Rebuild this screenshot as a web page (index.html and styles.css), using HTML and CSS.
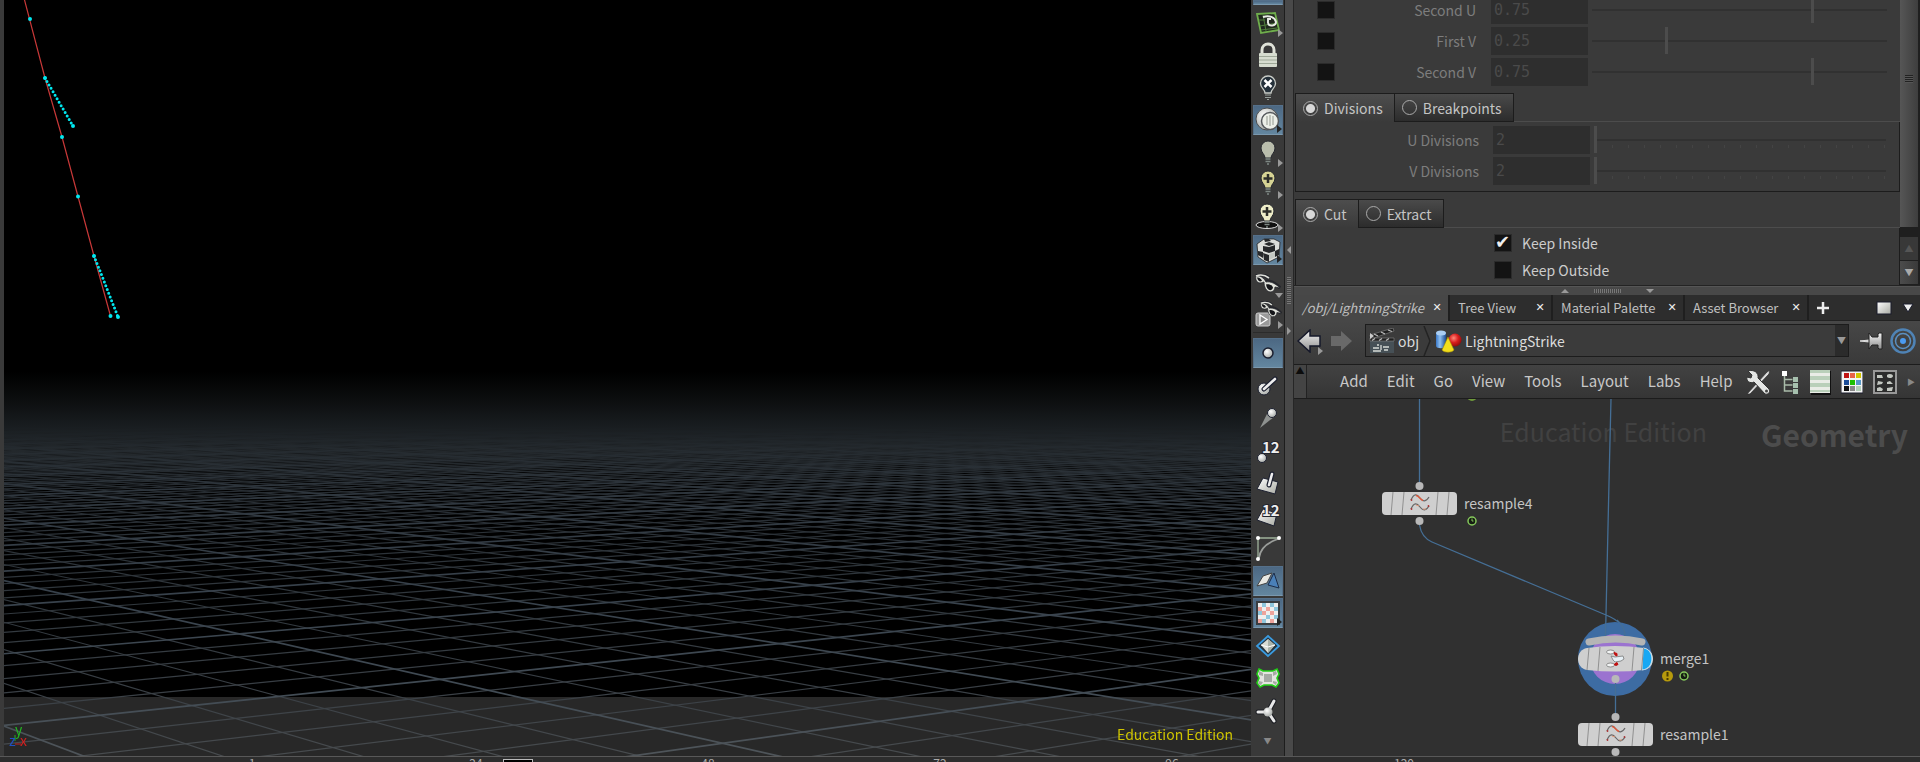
FILE: index.html
```html
<!DOCTYPE html>
<html lang="en">
<head>
<meta charset="utf-8">
<title>/obj/LightningStrike</title>
<link rel="stylesheet" href="styles.css">
</head>
<body>
<svg class="defs" aria-hidden="true">
  <defs>
    <linearGradient id="silver" x1="0" y1="0" x2="1" y2="1"><stop offset="0" stop-color="#fff"/><stop offset="1" stop-color="#a8aaa2"/></linearGradient>
    <linearGradient id="steel" x1="0" y1="0" x2="0" y2="1"><stop offset="0" stop-color="#f4f4f4"/><stop offset="1" stop-color="#8e8e8e"/></linearGradient>
    <linearGradient id="cyl" x1="0" y1="0" x2="1" y2="0"><stop offset="0" stop-color="#3a78c8"/><stop offset=".4" stop-color="#8fc0f0"/><stop offset="1" stop-color="#1b4a90"/></linearGradient>
    <radialGradient id="ball" cx=".38" cy=".35" r=".7"><stop offset="0" stop-color="#fff"/><stop offset="1" stop-color="#a4a8a4"/></radialGradient>
    <radialGradient id="redball" cx=".4" cy=".35" r=".7"><stop offset="0" stop-color="#ff8a7a"/><stop offset=".5" stop-color="#d81e1e"/><stop offset="1" stop-color="#8a0808"/></radialGradient>
    <symbol id="glasses" viewBox="0 0 26 19">
      <path d="M1 2c4-2 9-1 13 2M9 8c5-2 11 1 16 6" fill="none" stroke="#25262c" stroke-width="3.600"/>
      <path d="M1 2c-1 4 1 7 4 7 2 0 3-1 4-1 0 5 2 9 6 10 3 0 5-2 5-5l5 1c-4-4-9-7-14-6C9 4 5 1 1 2z" fill="#dfe1da" stroke="#25262c" stroke-width=".8"/>
      <path d="M1 2c4-1.500 9-1 13 2" fill="none" stroke="#dfe1da" stroke-width="1.600"/>
      <path d="M2 3.500c2-.5 4 1 5 3-1 1.500-4 1.500-5-3zM11 10.500c2-1 6 0 7 3-1 4-6 4-7-3z" fill="#141519"/>
    </symbol>
    <symbol id="wave" viewBox="0 0 20 18">
      <path d="M1 6c3-7 6-6 9-2s6 4 9-1M1 15c3-7 6-6 9-2s6 4 9-1" fill="none" stroke="#666" stroke-width="1.200"/>
      <path d="M6 1.500c3 0 4 4 7 5" fill="none" stroke="#e0583a" stroke-width="1.400"/>
      <path d="M6 11l3 1M13 15l3 0" fill="none" stroke="#e09a7a"/>
      <circle cx="1.500" cy="6" r=".9" fill="#a33"/><circle cx="1.500" cy="15" r=".9" fill="#a33"/><circle cx="18.500" cy="12" r=".9" fill="#a33"/>
    </symbol>
    <symbol id="clock" viewBox="0 0 10 10"><circle cx="5" cy="5" r="4" fill="#151c12" stroke="#86c95c" stroke-width="1.500"/><path d="M5 2.500V5h1.500" fill="none" stroke="#86c95c"/></symbol>
    <symbol id="bulb" viewBox="0 0 16 26"><path d="M5 18C5 14 1 13 1 8a7 7 0 0 1 14 0c0 5-4 6-4 10z" stroke="#26282e"/><path d="M5.500 19h5M5.500 21.500h5M7 24h2" stroke="#7e8884" stroke-width="1.500"/></symbol>
  </defs>
</svg>
<main class="workspace">
  <section class="viewport" aria-label="Scene view">
    <canvas class="grid-canvas"></canvas>
    <svg class="bolt" width="140" height="330" viewBox="0 0 140 330">
      <path class="bolt-line" d="M20 -2L41 78L58 137L74 196.500L90 256L106.500 316"/>
      <path class="bolt-points dense" d="M41 78L69 126M90 256L98 276L114 317"/>
      <path class="bolt-points" d="M26 19h0M41 78h0M58 137h0M74 196.500h0M90 256h0M106.500 316h0M69 126h0M114 317h0"/>
    </svg>
    <svg class="gizmo" width="26" height="26" viewBox="0 0 26 26">
      <path d="M9 18V12" stroke="#20b020"/><path d="M9 21h6" stroke="#c02020"/>
      <text x="9" y="12" fill="#22b822">y</text><text x="3" y="23" fill="#2050c0">z</text><text x="14" y="23" fill="#d02020">x</text>
    </svg>
    <p class="edition">Education Edition</p>
  </section>

  <nav class="toolbar" aria-label="Display options">
    <div class="tools">
      <button class="tool on clipped" aria-label="View mode"></button>
      <button class="tool more" aria-label="Reference plane"><svg width="26" height="24" viewBox="0 0 26 24"><path d="M2 3L20 2l4 17-18 3z" fill="#20281e" stroke="#6fae4c" stroke-width="1.800"/><path d="M5 15l17-3M6 19l16-2M4 9h6M8 4l3 16" stroke="#4f7c3c"/><path d="M8 6c6-2 12 0 13 5 0 4-7 5-8 1M13 12v-4h3" fill="none" stroke="#e8ece4" stroke-width="1.900"/></svg></button>
      <button class="tool" aria-label="Lock camera"><svg width="22" height="26" viewBox="0 0 22 26"><path d="M5 13V8c0-8 12-8 12 0v5" fill="none" stroke="#dfe2d8" stroke-width="3"/><rect x="2" y="11" width="18" height="14" rx="1" fill="#d6dccf"/><path d="M2 14.500h18M2 18h18M2 21.500h18" stroke="#9ea898"/></svg></button>
      <button class="tool" aria-label="No lights"><svg width="18" height="28" viewBox="0 0 18 26"><path d="M6 18C6 14 1.500 13 1.500 8.500a7.500 7.500 0 0 1 15 0C16.500 13 12 14 12 18z" fill="#24303a" stroke="#c9cdc8" stroke-width="1.300"/><path d="M5.500 5l7 7M12.500 5l-7 7" stroke="#fff" stroke-width="2.500"/><path d="M6 20h6M6 22.500h6M8 24.500h2" stroke="#98a09c"/></svg></button>
      <button class="tool on more" aria-label="Headlight"><svg width="26" height="26" viewBox="0 0 26 26"><circle cx="12" cy="12" r="11" fill="url(#ball)" stroke="#4a4d50"/><circle cx="15" cy="14" r="8.500" fill="#ecefe8" stroke="#55585c" stroke-width="1.500"/><path d="M12 9v9M15 8v11M18 9v9" stroke="#a9ada6" stroke-width="1.300"/></svg></button>
      <button class="tool more" aria-label="Normal lighting"><svg width="16" height="26" fill="#b9bdac"><use href="#bulb"/></svg></button>
      <button class="tool more raised" aria-label="High quality lighting"><svg width="16" height="26" viewBox="0 0 16 26" fill="#d6d394"><use href="#bulb"/><path d="M8 4v9M3.500 8.500h9" stroke="#2e2f2a" stroke-width="2.500"/></svg></button>
      <button class="tool more raised" aria-label="Shadows"><svg width="26" height="27" viewBox="0 0 26 27" fill="#eeedc8"><ellipse cx="12" cy="22" rx="11" ry="3.500" fill="#111" stroke="#ddd"/><use href="#bulb" x="4" width="16" height="26"/><path d="M12 4v9M7.500 8.500h9" stroke="#2e2f2a" stroke-width="2.500"/></svg></button>
      <button class="tool on more" aria-label="Materials"><svg width="26" height="28" viewBox="0 0 26 28"><path d="M2 8L9 3h10l6 3-1 15-12 6-9-6z" fill="#dcdeda" stroke="#222" stroke-width=".8"/><path d="M8 10l6 1v6l-6-2zM14 11l6-2v6l-6 2zM3 15l5 1v6l-5-3zM14 19l-6-2 1 7 5 2zM20 15l4-2v6l-4 2zM9 3l5 0 2 2-6 1zM9 8l5-2 6 2-6 2z" fill="#26282a"/><path d="M14 18l6-2v5l-6 3z" fill="#c4c8c2"/></svg></button>
      <button class="tool more-down" aria-label="Display geometry"><svg width="26" height="19"><use href="#glasses"/></svg></button>
      <button class="tool more" aria-label="Flipbook"><svg width="28" height="28" viewBox="0 0 28 28"><rect x="2" y="12" width="14" height="13" rx="2" fill="#9a9a9a" stroke="#ccc"/><path d="M6 14l7 4.500L6 23z" fill="#888" stroke="#fff" stroke-width="1.300"/><use href="#glasses" x="6" y="0" width="22" height="17"/></svg></button>
    </div>
    <div class="tools lower">
      <button class="tool on" aria-label="Points"><svg width="26" height="26"><circle cx="13" cy="13" r="5" fill="url(#ball)" stroke="#1c2030" stroke-width="1.500"/></svg></button>
      <button class="tool" aria-label="Point normals"><svg width="24" height="22" viewBox="0 0 24 22"><circle cx="8" cy="14" r="6" fill="url(#ball)" stroke="#1c2030"/><path d="M8 14L19 4" stroke="#1c2030" stroke-width="5" stroke-linecap="round"/><path d="M8 14L19 4" stroke="#eee" stroke-width="2.600" stroke-linecap="round"/></svg></button>
      <button class="tool" aria-label="Point trails"><svg width="22" height="24" viewBox="0 0 22 24"><path d="M3 22L11 6l6 5z" fill="#8f9290"/><circle cx="15" cy="7" r="4.500" fill="url(#ball)" stroke="#1c2030"/></svg></button>
      <button class="tool" aria-label="Point numbers"><svg width="26" height="26" viewBox="0 0 26 26"><circle cx="7" cy="20" r="4.500" fill="url(#ball)" stroke="#1c2030"/><text class="num" x="7" y="15">12</text></svg></button>
      <button class="tool" aria-label="Primitive normals"><svg width="26" height="26" viewBox="0 0 26 26"><path d="M2 19l6-11 15 4-3 12z" fill="url(#silver)" stroke="#1c2030"/><path d="M14 15l3-11" stroke="#1c2030" stroke-width="5" stroke-linecap="round"/><path d="M14 15l3-11" stroke="#eee" stroke-width="2.600" stroke-linecap="round"/></svg></button>
      <button class="tool" aria-label="Primitive numbers"><svg width="26" height="26" viewBox="0 0 26 26"><path d="M2 17l6-11 14 4-3 13z" fill="url(#silver)" stroke="#1c2030"/><text class="num" x="7" y="13">12</text></svg></button>
      <button class="tool" aria-label="Hulls"><svg width="26" height="28" viewBox="0 0 26 28"><path d="M3 4h21M3 4v21" stroke="#9fb19a" stroke-width="1.300"/><path d="M23 5C11 9 5 15 4 24" fill="none" stroke="#9a9d9a" stroke-width="1.800"/><g fill="#fff"><circle cx="3" cy="4" r="2"/><circle cx="24" cy="4" r="2"/><circle cx="3" cy="25" r="2"/></g></svg></button>
      <button class="tool on" aria-label="Faces"><svg width="24" height="20" viewBox="0 0 24 20"><path d="M12 14l6-12 5 15z" fill="#4a80b8" stroke="#1c2c48"/><path d="M1 15L7 5l9-3-5 10z" fill="#e8e8e2" stroke="#444"/></svg></button>
      <button class="tool on more" aria-label="UV texture"><svg width="24" height="24" viewBox="0 0 24 24"><rect x="1" y="1" width="22" height="22" fill="#eee" stroke="#3a3d40" stroke-width="2"/><path d="M6 2h4v4H6zM18 6h4v4h-4zM2 10h4v4H2zM10 14h4v4h-4zM14 2h4v4h-4zM6 18h4v4H6zM18 14h4v4h-4z" fill="#8fc6dc"/><path d="M2 6h4v4H2zM10 6h4v4h-4zM14 10h4v4h-4zM2 18h4v4H2zM14 18h4v4h-4zM6 10h4v4H6z" fill="#eda39b"/></svg></button>
      <button class="tool" aria-label="Profiles"><svg width="26" height="24" viewBox="0 0 26 24"><path d="M13 2l11 10-11 10L2 12z" fill="#26343e" stroke="#3a9be0" stroke-width="1.800"/><path d="M13 5l7 6-7 8-7-8z" fill="#d8dcd4"/><path d="M13 5v14l7-8z" fill="#a9b2a9"/><path d="M6 11l7 2 7-2" fill="none" stroke="#fff"/></svg></button>
      <button class="tool" aria-label="Subdivision"><svg width="26" height="22" viewBox="0 0 26 22"><path d="M4 2l4 2h10l4-2 2 5-2 4 2 5-3 4-4-2H9l-4 2-3-4 2-5-2-4z" fill="#e4e4e0" stroke="#22d016" stroke-width="1.600"/><path d="M9 7h8v8H9zM4 4l4 2v3L4 8zM18 5l3-1 1 3-4 2zM4 14l4 1-2 3-3-1zM18 14l4 1-1 3-3-2z" fill="#a6aaa4"/></svg></button>
      <button class="tool" aria-label="Origin axes"><svg width="26" height="26" viewBox="0 0 26 26"><path d="M13 14H3M13 14l6-11M13 14l6 9" stroke="#1c1e24" stroke-width="5" stroke-linecap="round"/><path d="M13 14H3M13 14l6-11M13 14l6 9" stroke="#e8e8e8" stroke-width="3" stroke-linecap="round"/><circle cx="13" cy="14" r="4.500" fill="url(#ball)"/></svg></button>
    </div>
    <button class="scroll-more" aria-label="More tools">▼</button>
  </nav>

  <div class="splitter-v"><span class="arrow-left"></span><span class="grip-v"></span><span class="arrow-right"></span></div>

  <section class="right-pane">
    <div class="params">
      <form class="params-body">
        <div class="param-rows">
          <div class="param"><input type="checkbox" aria-label="Enable Second U"><label for="su">Second U</label><input class="field" id="su" value="0.75" disabled><input type="range" min="0" max="100" value="75" disabled aria-label="Second U slider"></div>
          <div class="param"><input type="checkbox" aria-label="Enable First V"><label for="fv">First V</label><input class="field" id="fv" value="0.25" disabled><input type="range" min="0" max="100" value="25" disabled aria-label="First V slider"></div>
          <div class="param"><input type="checkbox" aria-label="Enable Second V"><label for="sv">Second V</label><input class="field" id="sv" value="0.75" disabled><input type="range" min="0" max="100" value="75" disabled aria-label="Second V slider"></div>
        </div>
        <div class="radio-tabs">
          <label class="radio-tab current"><input type="radio" name="split" checked>Divisions</label>
          <label class="radio-tab"><input type="radio" name="split">Breakpoints</label>
          <span class="tab-rule"></span>
        </div>
        <div class="group divisions">
          <div class="param int"><label for="ud">U Divisions</label><input class="field" id="ud" value="2" disabled><input type="range" min="2" max="20" value="2" disabled aria-label="U Divisions slider"></div>
          <div class="param int"><label for="vd">V Divisions</label><input class="field" id="vd" value="2" disabled><input type="range" min="2" max="20" value="2" disabled aria-label="V Divisions slider"></div>
        </div>
        <div class="radio-tabs">
          <label class="radio-tab current"><input type="radio" name="op" checked>Cut</label>
          <label class="radio-tab"><input type="radio" name="op">Extract</label>
          <span class="tab-rule"></span>
        </div>
        <div class="group keep">
          <label class="check"><input type="checkbox" checked>Keep Inside</label>
          <label class="check"><input type="checkbox">Keep Outside</label>
        </div>
      </form>
      <div class="scrollbar">
        <div class="scroll-thumb"><span></span></div>
        <button class="scroll-btn dim" aria-label="Scroll up">▲</button>
        <button class="scroll-btn" aria-label="Scroll down">▼</button>
      </div>
    </div>

    <div class="splitter-h"><span class="arrow-up"></span><span class="grip-h"></span><span class="arrow-down"></span></div>

    <div class="tabs">
      <div class="tab active"><span>/obj/LightningStrike</span><button aria-label="Close">✕</button></div>
      <div class="tab tree"><span>Tree View</span><button aria-label="Close">✕</button></div>
      <div class="tab mat"><span>Material Palette</span><button aria-label="Close">✕</button></div>
      <div class="tab asset"><span>Asset Browser</span><button aria-label="Close">✕</button></div>
      <button class="add-tab" aria-label="New tab"><svg width="14" height="14"><path d="M7 1v12M1 7h12" stroke="#eee" stroke-width="2.500"/></svg></button>
      <div class="tab-tools">
        <button aria-label="Maximize pane"><svg width="16" height="14"><rect x="1" y="1" width="14" height="12" fill="url(#silver)" stroke="#1a1c2c"/></svg></button>
        <button aria-label="Pane menu"><svg width="12" height="10"><path d="M1 1h10L6 9z" fill="#eee" stroke="#1a1c2c"/></svg></button>
      </div>
    </div>

    <div class="pathbar">
      <button class="more" aria-label="Back"><svg width="26" height="24" viewBox="0 0 26 24"><path d="M1 12L13 1v6h10v10H13v6z" fill="url(#steel)" stroke="#15182a" stroke-width="1.500"/></svg></button>
      <button aria-label="Forward"><svg width="24" height="22" viewBox="0 0 24 22"><path d="M23 11L12 1v5H2v10h10v5z" fill="#696969"/></svg></button>
      <div class="path">
        <svg width="26" height="26" viewBox="0 0 26 26"><rect x="1" y="13" width="24" height="12" fill="#465056"/><path d="M1 7L24 0l1 3L2 11z" fill="#1f1f1f" stroke="#888" stroke-width=".6"/><path d="M1 10h24v3H1z" fill="#1f1f1f" stroke="#888" stroke-width=".6"/><path d="M5 6l4 2M12 4l4 2M19 2l4 1.500M3 12.500l3-2M10 12.500l3-2M17 12.500l3-2" stroke="#bbb" stroke-width="1.300"/><path d="M1 5l4 3-4 3z" fill="#ccc"/><path d="M4 20h6M4 23h8M12 17v5M14 19h6M15 22h4M8 17h2" stroke="#d8dcd8" stroke-width="1.300"/></svg>
        <a href="#obj">obj</a>
        <svg class="chevron" width="8" height="30" viewBox="0 0 8 30"><path d="M1 0l6 15-6 15" fill="none" stroke="#232323" stroke-width="1.500"/></svg>
        <svg width="27" height="24" viewBox="0 0 27 24"><path d="M1 4v13c0 3 10 3 10 0V4z" fill="url(#cyl)"/><ellipse cx="6" cy="4" rx="5" ry="2.500" fill="#a9cdf2"/><circle cx="20" cy="11" r="6.500" fill="url(#redball)"/><path d="M13 8l6 13c-2 3-10 3-12 0z" fill="#f2de1c" stroke="#a08a08" stroke-width=".6"/></svg>
        <a href="#strike">LightningStrike</a>
        <button class="path-drop" aria-label="Path history">▼</button>
      </div>
      <button aria-label="Pin"><svg width="24" height="22" viewBox="0 0 24 22"><path d="M0 11l9-1v2z" fill="#eee" stroke="#ddd"/><path d="M9 3l3 4h6V4l1-1h3v16h-3l-1-1v-3h-6l-3 4z" fill="url(#steel)" stroke="#222"/></svg></button>
      <button aria-label="Linked"><svg width="26" height="26" viewBox="0 0 26 26" fill="none"><circle cx="13" cy="13" r="11.500" stroke="#4f83b5" stroke-width="2.500"/><circle cx="13" cy="13" r="7.500" stroke="#5b8fc0" stroke-width="1.500"/><circle cx="13" cy="13" r="3" fill="#4b9af0"/></svg></button>
    </div>

    <div class="menubar">
      <button class="menu-stow" aria-label="Collapse">▲</button>
      <nav class="menus"><button>Add</button><button>Edit</button><button>Go</button><button>View</button><button>Tools</button><button>Layout</button><button>Labs</button><button>Help</button></nav>
      <div class="menu-icons">
        <button aria-label="Customize"><svg width="26" height="26" viewBox="0 0 26 26"><path d="M2 25L22 3l3-2-1 4L5 25z" fill="#ddd" stroke="#333" stroke-width=".8"/><path d="M3 2l4 4-1 3-4-1C1 12 5 15 9 13l11 12c3 1 6-2 4-5L13 9c1-5-4-9-10-7z" fill="#e4e6e4" stroke="#333"/><circle cx="21.500" cy="22" r="1.500" fill="#444"/></svg></button>
        <button aria-label="Tree list"><svg width="18" height="24" viewBox="0 0 18 24"><rect x="1" y="1" width="5" height="5" fill="#fff"/><path d="M3.500 6v15h8M3.500 9.500h8M3.500 15h8" fill="none" stroke="#a9bba9" stroke-width="1.500"/><path d="M12 7h5v5h-5zM12 13h5v5h-5zM12 19h5v5h-5z" fill="#a6c0ae"/></svg></button>
        <button aria-label="List"><svg width="22" height="26" viewBox="0 0 22 26"><path d="M2 2h20v24H2z" fill="#111"/><path d="M1 1h20v23H1z" fill="#e9ece6"/><path d="M1 1h20v3H1zM1 7h20v4H1zM1 14h20v4H1zM1 21h20v2H1z" fill="#b9cfb9"/></svg></button>
        <button aria-label="Color palette"><svg width="22" height="24" viewBox="0 0 22 24"><path d="M0 1h22v22H0z" fill="#f4f4f4" stroke="#1a1c2c"/><path d="M3 3h5v5H3z" fill="#c01414"/><path d="M9 3h5v5H9z" fill="#e86048"/><path d="M15 3h5v5h-5z" fill="#d0c400"/><path d="M3 10h5v5H3z" fill="#1c4c98"/><path d="M9 10h5v5H9z" fill="#1cc000"/><path d="M15 10h5v5h-5z" fill="#5898c8"/><path d="M3 16h5v5H3z" fill="#111"/><path d="M9 16h5v5H9z" fill="#888"/><path d="M15 16h5v5h-5z" fill="#b4ceb8"/></svg></button>
        <button aria-label="Shape palette"><svg width="24" height="24" viewBox="0 0 24 24"><rect x="1" y="1" width="22" height="22" fill="#2c2c2c" stroke="#989898" stroke-width="2"/><path d="M4 5h5l1 3H4zM14 5c2-2 6-1 6 1s-4 3-6 1zM5 11l5 1-1 2-5 1zM14 12l3-1 3 3h-6zM4 18l3-1 3 2-1 2H4zM14 18l6-1-1 4h-5z" fill="#c4c8c2"/></svg></button>
        <button class="overflow" aria-label="More">▶</button>
      </div>
    </div>

    <div class="network">
      <div class="watermarks"><span class="wm-edition">Education Edition</span><span class="wm-type">Geometry</span></div>
      <svg class="graph" width="626" height="357" viewBox="0 0 626 357">
        <circle cx="178" cy="-3" r="5" fill="#6f9a3c"/>
        <g class="wire">
          <path d="M125.500 0V87M125.500 126C127 135 131 140 138 143L312 216C325 221 331 228 331.500 238M317 0L315.500 62L311.500 238"/>
        </g>
        <circle cx="321" cy="260" r="37" fill="#3d6ca3"/>
        <circle cx="321" cy="260" r="25" fill="#9b73d0"/>
        <path class="wire" d="M321.500 280v36M311.500 224v14M323 221c5 4 8 9 8.500 18"/>
        <path d="M295 243q27-6 53 0" fill="none" stroke="#b5b5b5" stroke-width="7" stroke-linecap="round"/>
        <g class="dots"><circle cx="125.500" cy="87" r="4"/><circle cx="125.500" cy="122" r="4"/><circle cx="321.500" cy="280" r="4"/><circle cx="321.500" cy="318" r="4"/><circle cx="321.500" cy="353" r="4"/></g>
        <g id="node-resample4">
          <rect class="node" x="88" y="93" width="75" height="23" rx="4"/>
          <path class="seams" d="M99 93l-2 23M110 93l-2 23M144 93l-2 23M155 93l-2 23"/>
          <use href="#wave" x="116" y="95" width="20" height="18"/>
        </g>
        <g id="node-resample1">
          <rect class="node" x="284" y="324" width="75" height="23" rx="4"/>
          <path class="seams" d="M295 324l-2 23M306 324l-2 23M340 324l-2 23M351 324l-2 23"/>
          <use href="#wave" x="312" y="326" width="20" height="18"/>
        </g>
        <g id="node-merge1">
          <path class="node" d="M293 249q28-4 57 0c12 2 12 20 0 22q-29 3-57 0c-12-2-12-20 0-22z"/>
          <path d="M349 249c12 1 12 21 -1 22z" fill="#18a8f4" stroke="#d8e8f0" stroke-width=".8"/>
          <path class="seams" d="M295 249l-2 22M306 248l-2 24M340 248l-2 24M349.500 249l-2 22"/>
          <ellipse cx="316.500" cy="253" rx="4" ry="2" fill="#f2f4f4" stroke="#777" stroke-width=".8"/>
          <ellipse cx="316.500" cy="266" rx="4" ry="2" fill="#f2f4f4" stroke="#777" stroke-width=".8"/>
          <path d="M317 257l4 1 8-1 1 3-3 2-6 1-2-2z" fill="#e6f0f6" stroke="#777" stroke-width=".8"/>
          <path d="M320 253.500l3 1v2.500l-2-1zM320 265.500l3-2 1 2-2 1z" fill="#c01010" stroke="#c01010"/>
        </g>
        <circle cx="373.500" cy="277" r="5.500" fill="#b79a0c"/><path d="M373.500 273v4.500M373.500 279v2" stroke="#4a3c00" stroke-width="2"/>
        <use href="#clock" x="385" y="272" width="10" height="10"/>
        <use href="#clock" x="173" y="117" width="10" height="10"/>
        <g class="names"><text x="170" y="110">resample4</text><text x="366" y="265">merge1</text><text x="366" y="341">resample1</text></g>
      </svg>
    </div>
  </section>
</main>
<footer class="timeline"><span class="first">1</span><span>24</span><span>48</span><span>72</span><span>96</span><span>120</span><i class="playhead"></i></footer>
<script src="grid.js"></script>
</body>
</html>
```
FILE: styles.css
```css
* { box-sizing: border-box; }
body {
  margin: 0; height: 100vh; display: flex; flex-direction: column; overflow: hidden;
  background: #3a3a3a; color: #ccc;
  font: 14px/20px "Noto Sans CJK SC", "Noto Sans", sans-serif;
}
button { padding: 0; border: 0; background: none; color: inherit; font: inherit; display: flex; align-items: center; justify-content: center; }
svg { display: block; flex: none; }
.defs { position: absolute; width: 0; height: 0; }
.workspace { flex: 1; display: flex; min-height: 0; }

.viewport { position: relative; flex: 1; min-width: 0; margin-left: 4px; background: #000; overflow: hidden; }
.grid-canvas { position: absolute; left: 0; top: 0; }
.bolt { position: absolute; left: 0; top: 0; }
.bolt-line { fill: none; stroke: #c83838; stroke-width: 1.2; }
.bolt-points { fill: none; stroke: #00e8f0; stroke-width: 4; stroke-linecap: round; }
.bolt-points.dense { stroke-width: 3; stroke-dasharray: 0 4; }
.gizmo { position: absolute; left: 2px; bottom: 7px; font: 14px "Noto Sans CJK SC", sans-serif; }
.edition { position: absolute; right: 18px; bottom: 12px; margin: 0; color: #cfc400; }

.toolbar { width: 34px; background: #393939; border-right: 1px solid #1d1d1d; display: flex; flex-direction: column; align-items: center; overflow: hidden; }
.tools { display: flex; flex-direction: column; gap: 2px; }
.tools.lower { margin-top: 1px; padding-top: 5px; border-top: 1px solid #2b2b2b; }
.tool { position: relative; width: 30px; height: 30px; }
.tool:nth-child(odd) { margin-bottom: 1px; }
.tool.raised { align-items: flex-start; }
.tool.on { background: linear-gradient(#4c6883, #63869f); border: 1px solid #7593ab; border-color: #55708a #55708a #7a98ae; }
.tool.clipped { height: 5px; }
.more, .more-down { position: relative; }
.more::after { content: ""; position: absolute; right: 0; bottom: 1px; border: 4px solid transparent; border-left: 5px solid #999; border-right: 0; }
.tool.on.more::after { border-left-color: #222; }
.more-down::after { content: ""; position: absolute; right: 0; bottom: 0; border: 4px solid transparent; border-top: 5px solid #999; border-bottom: 0; }
.num { font: bold 15px "Noto Sans CJK SC", sans-serif; fill: #eee; stroke: #23252e; stroke-width: 2px; paint-order: stroke; }
.scroll-more { margin-top: 8px; font-size: 8px; line-height: 14px; color: #888; }

.splitter-v { width: 9px; background: #494949; border-right: 1px solid #262626; display: flex; flex-direction: column; align-items: center; justify-content: flex-start; padding-top: 246px; gap: 23px; }
.arrow-left { border: 4px solid transparent; border-right: 4px solid #999; border-left: 0; }
.arrow-right { border: 4px solid transparent; border-left: 4px solid #999; border-right: 0; }
.grip-v { width: 4px; height: 27px; background: repeating-linear-gradient(#777 0 1px, #444 1px 2px); }

.right-pane { width: 32.6%; display: flex; flex-direction: column; min-width: 0; }
.params { height: 286px; display: flex; background: #3a3a3a; border-bottom: 1px solid #232323; overflow: hidden; flex: none; }
.params-body { flex: 1; display: flex; flex-direction: column; padding-left: 1px; min-width: 0; }
.param-rows { display: flex; flex-direction: column; gap: 3px; margin-top: -4px; padding-left: 22px; }
.param { display: flex; align-items: center; color: #7d7d7d; }
.param label { flex: 1; text-align: right; margin-right: 15px; }
.param .field { width: 97px; height: 28px; padding: 0 3px; border: 0; background: #2e2e2e; color: #4a4a4a; font: 15px "DejaVu Sans Mono", monospace; }
.param input[type=range] { width: 295px; margin: 0 13px 0 4px; }
.param.int label { margin-right: 14px; }
.param.int input[type=range] { width: 292px; background: repeating-linear-gradient(90deg, #444 0 1px, transparent 1px 16px) 2px 18px / 100% 3px no-repeat; }
input[type=range] { appearance: none; height: 27px; background: none; }
input[type=range]::-webkit-slider-runnable-track { height: 2px; background: #313131; }
input[type=range]::-webkit-slider-thumb { appearance: none; width: 3px; height: 27px; margin-top: -13px; background: #4c4c4c; }
input[type=checkbox] { appearance: none; margin: 0; width: 18px; height: 18px; background: #131313; border: 1px solid #2b2b2b; flex: none; position: relative; }
input[type=checkbox]:checked::after { content: "✔"; position: absolute; inset: -3px 0 0 0; font: 18px/20px "DejaVu Sans", sans-serif; color: #eee; }
.radio-tabs { display: flex; height: 29px; margin-top: 7px; flex: none; color: #c4c4c4; }
.radio-tab { display: flex; align-items: center; gap: 6px; padding: 0 11px 0 7px; border: 1px solid #1c1c1c; border-left-width: 0; background: linear-gradient(#4a4a4a, #2c2c2c); }
.radio-tab.current { background: linear-gradient(#4d4d4d, #3a3a3a); border-bottom: 0; border-left-width: 1px; }
.radio-tab input { appearance: none; margin: 0; width: 15px; height: 15px; border-radius: 50%; border: 1px solid #aaa; }
.radio-tab input:checked { background: radial-gradient(#d8d8d8 0 4px, transparent 5px); }
.tab-rule { flex: 1; border-bottom: 1px solid #4c4c4c; }
.group { border: 1px solid #1c1c1c; border-top: 0; }
.divisions { display: flex; flex-direction: column; gap: 3px; padding: 4px 0 5px; height: 70px; flex: none; }
.keep { flex: 1; border-bottom: 0; padding: 5px 0 0 198px; display: flex; flex-direction: column; gap: 7px; }
.check { display: flex; align-items: center; gap: 10px; }

.scrollbar { width: 20px; display: flex; flex-direction: column; background: #1f1f1f; padding-right: 2px; }
.scroll-thumb { height: 228px; margin-bottom: 10px; background: linear-gradient(90deg, #565656, #3e3e3e); padding: 75px 5px 0; }
.scroll-thumb span { display: block; height: 8px; background: repeating-linear-gradient(#222 0 1px, #555 1px 2px); }
.scroll-btn { height: 23px; margin-bottom: 1px; background: linear-gradient(90deg, #4c4c4c, #3a3a3a); font-size: 9px; color: #aaa; }
.scroll-btn.dim { background: #383838; color: #555; }

.splitter-h { height: 9px; flex: none; background: #484848; border-top: 1px solid #555; display: flex; align-items: center; justify-content: center; gap: 25px; }
.arrow-up { border: 4px solid transparent; border-bottom: 4px solid #999; border-top: 0; }
.arrow-down { border: 4px solid transparent; border-top: 4px solid #999; border-bottom: 0; }
.grip-h { width: 27px; height: 4px; background: repeating-linear-gradient(90deg, #777 0 1px, #444 1px 2px); }

.tabs { height: 26px; flex: none; display: flex; align-items: stretch; background: #2d2d2d; color: #c0c0c0; font-size: 13px; border-bottom: 1px solid #222; }
.tab { display: flex; align-items: center; justify-content: space-between; padding: 0 5px 0 8px; border-right: 2px solid #1f1f1f; }
.tab button { width: 12px; font: bold 11px/20px "DejaVu Sans", sans-serif; color: #eee; }
.tab.active { width: 156px; background: #474747; font-style: italic; margin-bottom: -1px; }
.tab.tree { width: 103px; }
.tab.mat { width: 132px; }
.tab.asset { width: 124px; }
.add-tab { margin-left: 7px; }
.tab-tools { margin-left: auto; display: flex; gap: 10px; padding-right: 6px; }

.pathbar { height: 43px; flex: none; display: flex; align-items: center; padding: 0 4px 4px 3px; background: linear-gradient(#474747, #3a3a3a); gap: 6px; color: #dcdcdc; }
.pathbar > button { height: 30px; }
.path { flex: 1; height: 33px; display: flex; align-items: center; padding-left: 3px; margin: 0 5px 0 6px; background: #3b3b3b; border: 1px solid #1c1c1c; }
.path a { color: inherit; text-decoration: none; margin-left: 3px; }
.chevron { margin: 0 4px; }
.path-drop { margin-left: auto; width: 13px; align-self: stretch; background: #2b2b2b; font-size: 9px; color: #999; }

.menubar { height: 35px; flex: none; display: flex; align-items: center; background: linear-gradient(#424242, #353535); border-top: 1px solid #1c1c1c; border-bottom: 1px solid #1c1c1c; }
.menu-stow { width: 13px; align-self: stretch; align-items: flex-start; font-size: 9px; line-height: 12px; color: #0c0c0c; border-right: 1px solid #222; background: #444; }
.menus { display: flex; gap: 19px; margin-left: 33px; padding-bottom: 2px; font-size: 15px; color: #c8c8c8; }
.menu-icons { display: flex; align-items: center; gap: 10px; margin-left: auto; padding-right: 5px; }
.overflow { font-size: 8px; color: #888; }

.network { position: relative; flex: 1; background: #303030; overflow: hidden; min-height: 0; }
.watermarks { display: flex; align-items: flex-start; justify-content: flex-end; gap: 54px; padding: 13px 12px 0 0; line-height: 44px; }
.wm-edition { font-size: 25px; line-height: 38px; color: #414141; }
.wm-type { font-size: 30px; font-weight: bold; color: #4c4c4c; }
.graph { position: absolute; left: 0; top: 0; }
.wire, .wire path { fill: none; stroke: #456f96; stroke-width: 1.3; }
.dots { fill: #b8b8b8; }
.node { fill: #cfcfcf; }
.seams { stroke: #909090; fill: none; }
.names { font: 14px "Noto Sans CJK SC", sans-serif; fill: #c4c4c4; }

.timeline { position: relative; height: 6px; flex: none; display: flex; overflow: hidden; padding-left: 144px; background: #2d2d2d; border-top: 1px solid #585858; font-size: 12px; line-height: 12px; color: #aaa; }
.timeline span { width: 232px; text-align: center; }
.timeline .first { width: 216px; }
.playhead { position: absolute; left: 503px; top: 2px; width: 30px; height: 12px; border: 1px solid #bbb; background: #000; }
```
FILE: grid.js
```js
const canvas = document.querySelector('.grid-canvas');
const HORIZON = 362;
const FLOOR = 697;

// Ground plane: 1/(y - horizon) and x/(y - horizon) are linear in the two grid indices.
const W = { base: 0.0026226, i: 0.0004, j: 0.000528 };
const S = { base: 1.895, i: 1.38, j: -0.508 };

function pointOn(family, index, y) {
  const t = 1 / (y - HORIZON);
  let i = index, j = index;
  if (family === 'i') j = (t - W.base - W.i * i) / W.j;
  else i = (t - W.base - W.j * j) / W.i;
  return [(S.base + S.i * i + S.j * j) * (y - HORIZON) - 4, y];
}

function draw() {
  const { clientWidth: w, clientHeight: h } = canvas.parentElement;
  canvas.width = w;
  canvas.height = h;
  const g = canvas.getContext('2d');
  g.fillStyle = '#282828';
  g.fillRect(0, FLOOR, w, h - FLOOR);

  const shade = (stops) => {
    const grad = g.createLinearGradient(0, 372, 0, 756);
    stops.forEach(([y, c]) => grad.addColorStop((y - 372) / 384, c));
    return grad;
  };
  const minor = shade([[372, '#000000'], [400, '#0c0e0f'], [425, '#181c1f'], [450, '#23282c'], [500, '#282e34'], [600, '#30373d'], [690, '#393f45'], [756, '#484c4f']]);
  const major = shade([[372, '#000000'], [400, '#0c0e0f'], [425, '#181c1f'], [450, '#252b30'], [500, '#303840'], [600, '#38424c'], [690, '#414b54'], [756, '#4f555a']]);

  for (const heavy of [false, true]) {
    g.strokeStyle = heavy ? major : minor;
    g.lineWidth = heavy ? 1.7 : 1.2;
    for (const family of ['i', 'j']) {
      for (let n = -60; n < 900; n++) {
        if ((n % 5 === 0) !== heavy) continue;
        g.beginPath();
        g.moveTo(...pointOn(family, n / 5, 372));
        g.lineTo(...pointOn(family, n / 5, 800));
        g.stroke();
      }
    }
  }
}

draw();
addEventListener('resize', draw);
```
